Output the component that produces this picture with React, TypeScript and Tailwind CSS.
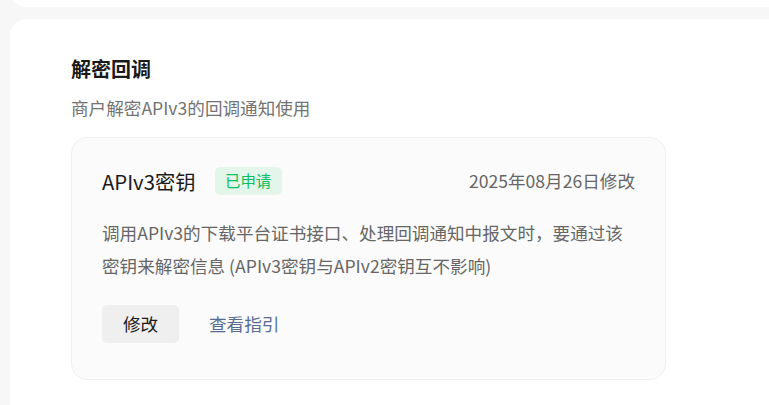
export default function App() {
  const font = { fontFamily: '"Noto Sans CJK SC", "Noto Sans", sans-serif' };
  return (
    <div className="min-h-[405px] w-[769px] overflow-hidden bg-[#f7f7f7]" style={font}>
      <div className="ml-[10px] mt-[-16px] h-[23px] rounded-bl-[16px] bg-white" />
      <div className="ml-[10px] mt-[12px] h-[400px] rounded-tl-[16px] bg-white pl-[61px] pt-[36px]">
        <div className="text-[20px] font-bold leading-[28px] text-[#1a1a1a]">解密回调</div>
        <div className="mt-[12px] text-[17.6px] leading-[26px] text-[#737373]">商户解密APIv3的回调通知使用</div>
        <div className="mt-[16px] flex h-[243px] w-[595px] flex-col rounded-[16px] border border-[#f0f0f0] bg-[#fbfbfb] px-[30px] pt-[29px]">
          <div className="flex h-[28px] items-center">
            <span className="text-[20.3px] leading-[28px] text-[#1a1a1a]">APIv3密钥</span>
            <span className="ml-[19px] flex h-[28px] items-center rounded-[5px] bg-[#e4f6ea] px-[10.5px] text-[15.4px] text-[#07c160]">
              已申请
            </span>
            <span className="ml-auto text-[17.6px] text-[#666666]">2025年08月26日修改</span>
          </div>
          <div className="mt-[21px] w-[525px] text-[17.6px] leading-[33px] text-[#666666]">
            调用APIv3的下载平台证书接口、处理回调通知中报文时，要通过该密钥来解密信息 (APIv3密钥与APIv2密钥互不影响)
          </div>
          <div className="mt-[23px] flex items-center">
            <button className="flex h-[38px] w-[77px] items-center justify-center rounded-[5px] bg-[#efefef] text-[17.6px] text-[#1a1a1a]">
              修改
            </button>
            <span className="ml-[30px] text-[17.6px] text-[#576b95]">查看指引</span>
          </div>
        </div>
      </div>
    </div>
  );
}
